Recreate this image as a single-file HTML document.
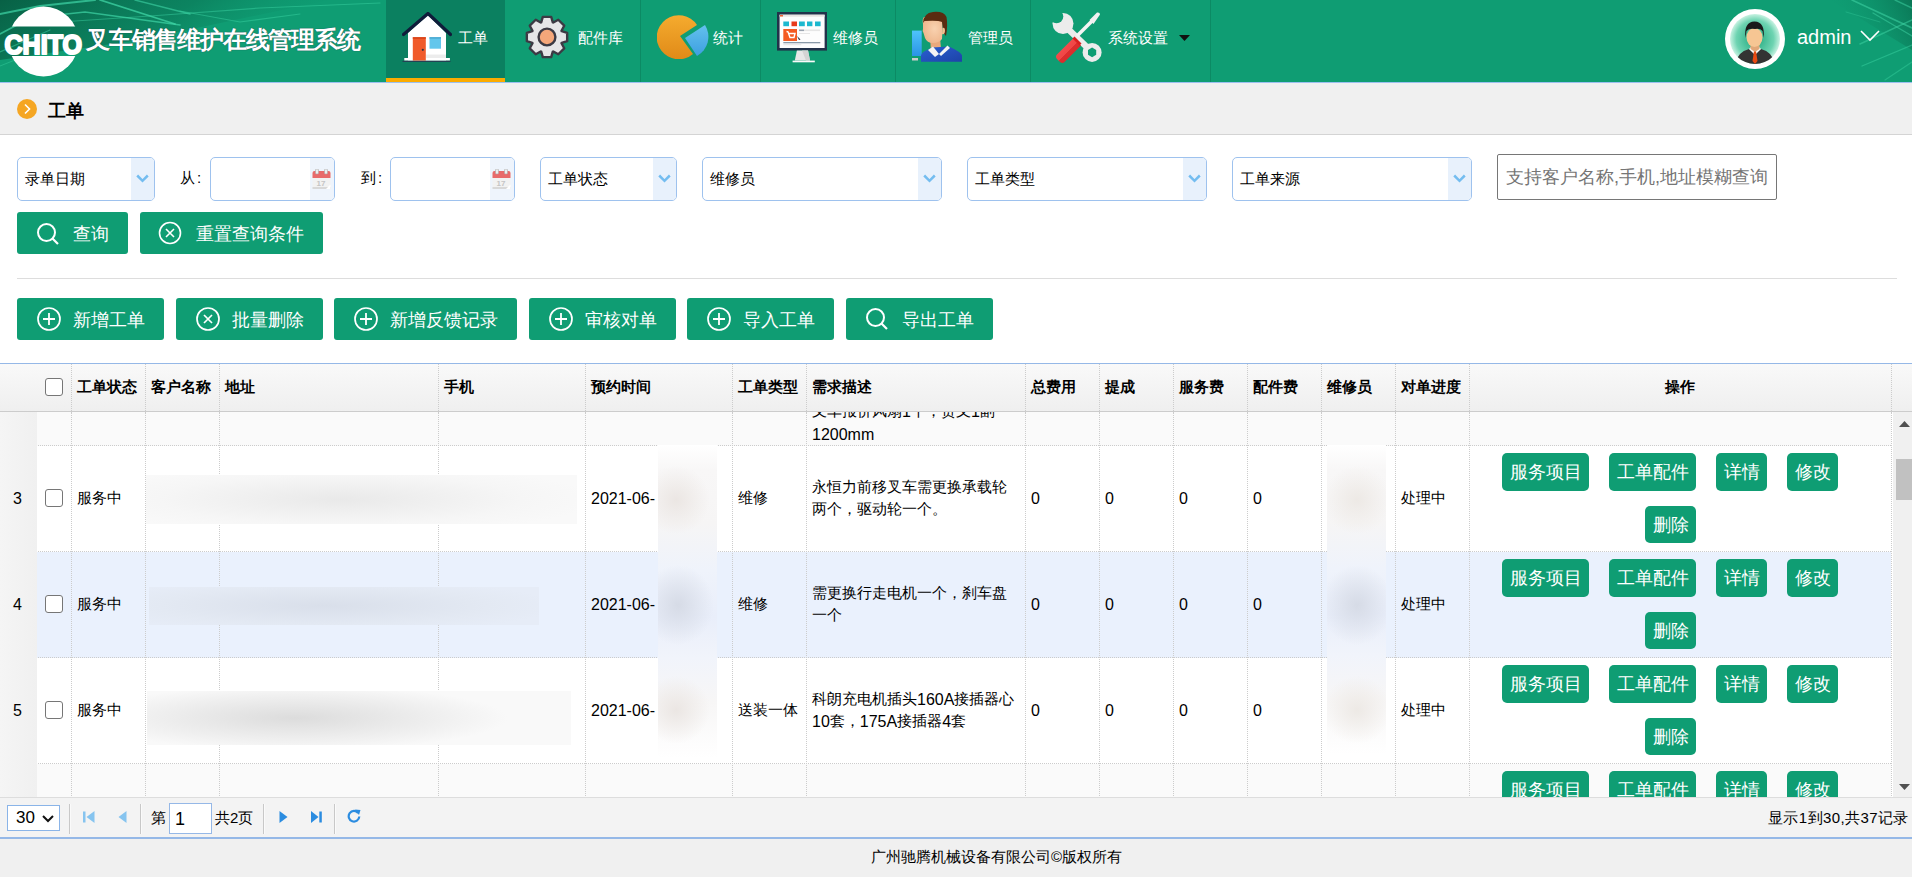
<!DOCTYPE html>
<html><head><meta charset="utf-8">
<style>
*{margin:0;padding:0;box-sizing:border-box}
html,body{width:1912px;height:877px;overflow:hidden;background:#f0f0f0;font-family:"Liberation Sans",sans-serif;color:#000}
.abs{position:absolute}
#hdr{position:absolute;left:0;top:0;width:1912px;height:82px;background:#0f9d73;overflow:hidden}
.nav{position:absolute;top:0;height:82px;border-right:1px solid #0c8a64}
.nav .t{position:absolute;top:29px;font-size:15px;color:#fff;line-height:18px;white-space:nowrap}
.nav svg{position:absolute;top:12px}
#crumb{position:absolute;left:0;top:83px;width:1912px;height:52px;background:#f0f0f0;border-bottom:1px solid #d4d4d4}
#main{position:absolute;left:0;top:135px;width:1912px;height:228px;background:#fff}
.sel{position:absolute;top:157px;height:44px;border:1px solid #9ec2ee;border-radius:5px;background:#fff;overflow:hidden}
.sel .v{position:absolute;left:7px;top:12px;font-size:15px;line-height:18px;color:#000;white-space:nowrap}
.sel .dd{position:absolute;right:0;top:0;width:23px;height:100%;background:#e8f1fc}
.sel .dd svg{position:absolute;left:5px;top:16px}
.lbl{position:absolute;top:169px;font-size:15px;line-height:18px}
.btn{position:absolute;background:#0f9d73;border-radius:3px;color:#fff;font-size:18px;line-height:22px;white-space:nowrap}
.btn svg{position:absolute}
.btn span{position:absolute}
#grid{position:absolute;left:0;top:364px;width:1912px;height:434px;background:#fff;overflow:hidden}
.hrow{position:absolute;left:0;top:0;width:1891px;height:48px;background:linear-gradient(#f9f9f9,#efefef);border-bottom:1px solid #ccc}
.hc{position:absolute;top:14px;font-size:15px;font-weight:bold;line-height:18px;white-space:nowrap}
.vl{position:absolute;width:0;border-left:1px dotted #ccc}
.row{position:absolute;left:0;width:1891px;border-bottom:1px dotted #ccc}
.cell{position:absolute;font-size:15px;line-height:22px;white-space:nowrap}
.ob{position:absolute;height:38px;background:#0f9d73;border-radius:5px;color:#fff;font-size:18.3px;line-height:38px;text-align:center;white-space:nowrap}
.rn{position:absolute;left:0;width:37px;background:linear-gradient(90deg,#f5f5f5,#f0f0f0)}
.cb{position:absolute;width:18px;height:18px;border:1px solid #767676;border-radius:3px;background:#fff}
#pager{position:absolute;left:0;top:797px;width:1912px;height:42px;background:#f3f3f3;border-top:1px solid #ddd;border-bottom:2px solid #95b8e7}
.ptxt{position:absolute;font-size:15px;line-height:18px;white-space:nowrap}
.psep{position:absolute;top:6px;width:2px;height:30px;background:#c8c8c8;border-right:1px solid #fafafa}
#foot{position:absolute;left:0;top:839px;width:1912px;height:38px;background:#f0f0f0}
.blur{position:absolute;filter:blur(6px)}
.as{font-size:16px;position:relative;top:1px}
</style></head><body>

<div id="hdr">
  <!-- background pattern -->
  <svg class="abs" style="left:0;top:0" width="1912" height="82">
    <defs>
      <linearGradient id="lg1" x1="0" y1="0" x2="1" y2="0.3">
        <stop offset="0" stop-color="#075a40" stop-opacity="0.9"/><stop offset="0.55" stop-color="#096b4e" stop-opacity="0.5"/><stop offset="1" stop-color="#0f9d73" stop-opacity="0"/>
      </linearGradient>
      <linearGradient id="lg2" x1="1" y1="0" x2="0" y2="0.3">
        <stop offset="0" stop-color="#075a40" stop-opacity="0.8"/><stop offset="1" stop-color="#0f9d73" stop-opacity="0"/>
      </linearGradient>
      <mask id="bandm"><rect width="90" height="82" fill="#fff"/><rect x="0" y="26.5" width="90" height="29.5" fill="#000"/></mask>
    </defs>
    <path d="M0 0H330L140 40L0 60Z" fill="url(#lg1)"/>
    <g stroke="#3fd6a6" fill="none" stroke-linecap="round">
      <path d="M0 14 L40 6 L95 0" stroke-width="2" opacity="0.7"/>
      <path d="M0 34 L30 18 L85 12 L180 25" stroke-width="1.6" opacity="0.7"/>
      <path d="M100 0 L175 24" stroke-width="1.8" opacity="0.75"/>
      <path d="M135 0 L190 14" stroke-width="1.4" opacity="0.6"/>
      <path d="M60 22 L150 16 L260 8 L380 3" stroke-width="1.2" opacity="0.45"/>
      <path d="M180 11 L240 22 L300 14" stroke-width="1.2" opacity="0.45"/>
      <path d="M0 52 L50 30" stroke-width="1.2" opacity="0.5"/>
      <path d="M0 66 L20 58" stroke-width="1" opacity="0.4"/>
    </g>
    <path d="M1912 0H1830L1912 50Z" fill="url(#lg2)" opacity="0.7"/>
    <g stroke="#3fd6a6" fill="none" stroke-linecap="round">
      <path d="M1852 0 L1912 28" stroke-width="1.6" opacity="0.55"/>
      <path d="M1873 13 L1912 36" stroke-width="1.4" opacity="0.5"/>
      <path d="M1895 0 L1912 8" stroke-width="1.4" opacity="0.5"/>
      <path d="M1860 44 L1912 20" stroke-width="1.5" opacity="0.5"/>
      <path d="M1862 66 L1912 45" stroke-width="1.3" opacity="0.45"/>
      <path d="M1885 80 L1912 62" stroke-width="1.2" opacity="0.4"/>
      <path d="M1846 12 L1880 22" stroke-width="1" opacity="0.3"/>
    </g>
  </svg>
  <!-- logo -->
  <svg class="abs" style="left:0;top:0" width="90" height="82">
    <circle cx="43.5" cy="41.5" r="35" fill="#fff" mask="url(#bandm)"/>
    <text x="4.5" y="54" font-family="Liberation Sans" font-weight="bold" font-size="28" fill="#fff" stroke="#fff" stroke-width="2.2" stroke-linejoin="round" textLength="77.5" lengthAdjust="spacingAndGlyphs">CHITO</text>
  </svg>
  <div class="abs" style="left:86px;top:26px;font-size:24px;line-height:28px;font-weight:bold;color:#fff;letter-spacing:-1.2px;white-space:nowrap;text-shadow:0 0 1px #234">叉车销售维护在线管理系统</div>

  <!-- nav -->
  <div class="nav" style="left:386px;width:119px;background:#0b8060;border-right:none">
    <svg style="left:16px;top:12px" width="50" height="52" viewBox="0 0 50 52">
      <path d="M6 48.6V21L26 3L44 21V48.6Z" fill="#fff"/>
      <path d="M23.8 42.5H44V46H23.8Z" fill="#ececec"/>
      <path d="M1.5 22.5L26 1.5L48.5 22.5" stroke="#0f1c3a" stroke-width="3.2" fill="none" stroke-linejoin="round" stroke-linecap="round"/>
      <rect x="2.3" y="46" width="45.6" height="2.6" fill="#fff"/>
      <rect x="10.8" y="25.2" width="13" height="23.4" fill="#f05a2a"/>
      <rect x="10.8" y="25.2" width="13" height="1.6" fill="#d84418"/>
      <circle cx="20.8" cy="37.8" r="1.1" fill="#2a3344"/>
      <rect x="27.5" y="25.2" width="11.5" height="11.5" fill="#62c6ec"/>
      <rect x="27.5" y="25.2" width="11.5" height="1.5" fill="#4aa8d0"/>
      <rect x="0.5" y="48.8" width="48" height="1" fill="#2a3350"/>
    </svg>
    <div class="t" style="left:72px">工单</div>
    <div class="abs" style="left:0;top:78px;width:119px;height:4px;background:#fbab00"></div>
  </div>
  <div class="nav" style="left:505px;width:136px">
    <svg style="left:19px;top:14px" width="46" height="46" viewBox="0 0 46 46">
      <path d="M17.20 8.30L18.80 2.83L27.20 2.83L28.80 8.30A15.8 15.8 0 0 1 29.29 8.51L34.29 5.77L40.23 11.71L37.49 16.71A15.8 15.8 0 0 1 37.70 17.20L43.17 18.80L43.17 27.20L37.70 28.80A15.8 15.8 0 0 1 37.49 29.29L40.23 34.29L34.29 40.23L29.29 37.49A15.8 15.8 0 0 1 28.80 37.70L27.20 43.17L18.80 43.17L17.20 37.70A15.8 15.8 0 0 1 16.71 37.49L11.71 40.23L5.77 34.29L8.51 29.29A15.8 15.8 0 0 1 8.30 28.80L2.83 27.20L2.83 18.80L8.30 17.20A15.8 15.8 0 0 1 8.51 16.71L5.77 11.71L11.71 5.77L16.71 8.51A15.8 15.8 0 0 1 17.20 8.30Z" fill="#e6e6e8" stroke="#3c3a44" stroke-width="2.4" stroke-linejoin="round"/>
      <circle cx="23" cy="23" r="8.4" fill="#f5a77a" stroke="#3c3a44" stroke-width="2.4"/>
    </svg>
    <div class="t" style="left:73px">配件库</div>
  </div>
  <div class="nav" style="left:641px;width:120px">
    <svg style="left:16px;top:13px" width="52" height="46" viewBox="0 0 52 46">
      <defs><linearGradient id="po" x1="0" y1="0" x2="0" y2="1"><stop offset="0" stop-color="#f5ab2e"/><stop offset="1" stop-color="#e08a18"/></linearGradient>
      <linearGradient id="pb" x1="0" y1="0" x2="0" y2="1"><stop offset="0" stop-color="#63c1ee"/><stop offset="1" stop-color="#3d9fe0"/></linearGradient></defs>
      <path d="M23 23 L40 12 A22 22 0 1 0 36 41 Z" fill="url(#po)"/>
      <path d="M28 25 L48 12 A22 22 0 0 1 40 43 Z" fill="url(#pb)"/>
    </svg>
    <div class="t" style="left:72px">统计</div>
  </div>
  <div class="nav" style="left:761px;width:135px">
    <svg style="left:16px;top:12px" width="52" height="52" viewBox="0 0 52 52">
      <rect x="0" y="0" width="50" height="38.6" fill="#22324a"/>
      <rect x="2.6" y="2.7" width="45" height="33.3" fill="#fdfdfd"/>
      <rect x="2.6" y="2.7" width="45" height="2" fill="#e8e4e2"/>
      <rect x="3" y="3" width="3" height="1.5" fill="#f06030"/>
      <rect x="6.3" y="9.5" width="5.7" height="4.7" fill="#1cb8cf"/><rect x="14.5" y="9.5" width="5.5" height="4.7" fill="#e83a1a"/><rect x="22" y="9.5" width="5.8" height="4.7" fill="#1cb8cf"/><rect x="30" y="9.5" width="5.4" height="4.7" fill="#1cb8cf"/><rect x="38" y="9.5" width="5.6" height="4.7" fill="#1cb8cf"/>
      <rect x="6.3" y="17" width="13.7" height="12" fill="#f45a22"/>
      <path d="M9.5 19.5 L11 19.8 L13 25.5 H17 L18 21.5 H11.8" stroke="#fff" stroke-width="1.4" fill="none"/>
      <path d="M20 24 L23.5 27.5 L22 28Z" fill="#223"/>
      <rect x="22" y="17.5" width="5" height="1.6" fill="#9aa4b0"/><rect x="27" y="17.5" width="16" height="1.6" fill="#e6e6e6"/>
      <rect x="22" y="21" width="11" height="0.8" fill="#e0e0e0"/>
      <rect x="6.3" y="30" width="37" height="1.3" fill="#8a9aa8"/>
      <rect x="6.3" y="32.2" width="18" height="1" fill="#e4e4e4"/>
      <path d="M19.9 38.6 H31 L33 48.6 H17.8Z" fill="#e8e8e8"/>
      <path d="M25 38.6 H31 L33 48.6 H29Z" fill="#d4d4d4"/>
      <rect x="15.6" y="48.6" width="22.2" height="1.7" fill="#fafafa"/>
    </svg>
    <div class="t" style="left:72px">维修员</div>
  </div>
  <div class="nav" style="left:896px;width:135px">
    <svg style="left:15px;top:11px" width="52" height="52" viewBox="0 0 52 52">
      <defs><linearGradient id="mb" x1="0" y1="0" x2="0" y2="1"><stop offset="0" stop-color="#4fc4fb"/><stop offset="1" stop-color="#2a94e6"/></linearGradient>
      <linearGradient id="sw" x1="0" y1="0" x2="1" y2="1"><stop offset="0" stop-color="#2a5fd0"/><stop offset="1" stop-color="#1d42a8"/></linearGradient>
      <radialGradient id="fc" cx="0.6" cy="0.45" r="0.6"><stop offset="0" stop-color="#f9d2b0"/><stop offset="1" stop-color="#eeb68c"/></radialGradient></defs>
      <rect x="1" y="19.6" width="9.7" height="25.4" fill="url(#mb)"/>
      <rect x="1" y="47" width="6" height="2.5" fill="#ccc"/>
      <path d="M19 26 L29 26 L30 38 L20 40Z" fill="#e9a97c"/>
      <path d="M10 50.7 V44.5 Q11 41 15 39.5 L21 36.5 L38 35.5 Q50 41 51 44.5 V50.7Z" fill="url(#sw)"/>
      <path d="M17 39 L22 35.5 L28 43 L24 46Z" fill="#f4f4f4"/>
      <path d="M28 43 L36.5 34.5 L39 37 L30 45Z" fill="#f4f4f4"/>
      <path d="M12 13 Q11 8 13 6 L29 6 Q32 8 31.5 18 L31 28 Q28 32 22 32 Q16 32 14 27 L12.5 22 Q11 20 12 18Z" fill="url(#fc)"/>
      <path d="M12 12 Q12.5 2 22 1 Q33 0 35.5 6 Q37 14 35 25 L32.5 22 L31 11 Q27 9 13.5 10 Z" fill="#5a2c10"/>
      <path d="M31.5 17 Q34 16 34 20 Q33.5 24 31 23Z" fill="#f0c090"/>
    </svg>
    <div class="t" style="left:72px">管理员</div>
  </div>
  <div class="nav" style="left:1031px;width:180px">
    <svg style="left:19px;top:11px" width="52" height="52" viewBox="0 0 52 52">
      <defs><mask id="wm"><rect width="52" height="52" fill="#fff"/><circle cx="6.5" cy="5.5" r="6.8" fill="#000"/><path d="M42.1 36.6 L46.2 39 V43.8 L42.1 46.2 L38 43.8 V39Z" fill="#000"/></mask>
      <linearGradient id="rh" x1="0" y1="0" x2="1" y2="1"><stop offset="0" stop-color="#f75656"/><stop offset="0.5" stop-color="#f04646"/><stop offset="0.51" stop-color="#dc2e2e"/><stop offset="1" stop-color="#d42626"/></linearGradient></defs>
      <g mask="url(#wm)" fill="#ececec">
        <circle cx="13" cy="12.5" r="10.5"/>
        <path d="M17 17 L42 41" stroke="#ececec" stroke-width="6.5"/>
        <circle cx="42.1" cy="41.4" r="9.5"/>
      </g>
      <path d="M27 25 L44 8" stroke="#f4f4f4" stroke-width="3.6"/>
      <path d="M39.5 9 L47 1.5 Q50 1 50 3.5 L43.5 13 Z" fill="#f0f0f0"/>
      <path d="M23.5 27 L7 43.5 Q5 45.5 7 48 L10 51 Q12.5 53 14.5 51 L31 34.5Z" fill="url(#rh)"/>
      <path d="M24.5 25.5 L31.5 32.5 L29.5 34.5 L22.5 27.5Z" fill="#d91f1f"/>
    </svg>
    <div class="t" style="left:77px">系统设置</div>
    <svg style="left:148px;top:35px" width="11" height="6"><path d="M0 0H11L5.5 6Z" fill="#111"/></svg>
  </div>

  <!-- user -->
  <svg class="abs" style="left:1725px;top:9px" width="60" height="60" viewBox="0 0 60 60">
    <defs><radialGradient id="av" cx="0.5" cy="0.5" r="0.5"><stop offset="0" stop-color="#1aa57a"/><stop offset="0.75" stop-color="#6fd4b2"/><stop offset="1" stop-color="#c8f2e2"/></radialGradient>
    <clipPath id="avc"><circle cx="30" cy="30" r="25"/></clipPath></defs>
    <circle cx="30" cy="30" r="30" fill="#fff"/>
    <circle cx="30" cy="30" r="25" fill="url(#av)"/>
    <g clip-path="url(#avc)">
      <path d="M10 56 Q12 43 24 40 L30 45 L36 40 Q48 43 50 56Z" fill="#333"/>
      <path d="M24 40 L30 46 L36 40 L34 38 H26Z" fill="#fafafa"/>
      <path d="M29 42 H31 L32.5 52 L30 55 L27.5 52Z" fill="#e84a12"/>
      <path d="M25.5 34 H34.5 V40 L30 43 L25.5 40Z" fill="#e2a878"/>
      <ellipse cx="29.5" cy="28.5" rx="8" ry="9.5" fill="#f6c693"/>
      <path d="M20.5 29 Q18.5 13 29.5 12.5 Q40.5 13 38.5 29 L37.5 22 Q35 19 30 20 Q24 19 21.5 22Z" fill="#1a1a1a"/>
    </g>
  </svg>
  <div class="abs" style="left:1797px;top:25px;font-size:20px;line-height:24px;color:#fff">admin</div>
  <svg class="abs" style="left:1860px;top:30px" width="20" height="12"><path d="M1 1 L10 10 L19 1" stroke="#fff" stroke-width="1.6" fill="none"/></svg>
</div>
<div class="abs" style="left:0;top:82px;width:1912px;height:1px;background:#9cc0f0"></div>

<!-- breadcrumb -->
<div id="crumb">
  <svg class="abs" style="left:17px;top:16px" width="20" height="20"><circle cx="10" cy="10" r="10" fill="#f5a623"/><path d="M8 5.5 L12.5 10 L8 14.5" stroke="#fff" stroke-width="1.6" fill="none"/></svg>
  <div class="abs" style="left:48px;top:17px;font-size:18px;line-height:22px;font-weight:bold">工单</div>
</div>

<!-- main filter area -->
<div id="main">
  <div class="abs" style="left:17px;top:143px;width:1880px;height:1px;background:#ddd"></div>
</div>

<div class="sel" style="left:17px;width:138px"><div class="v">录单日期</div><div class="dd"><svg width="13" height="9"><path d="M1.2 1.5 L6.5 6.8 L11.8 1.5" stroke="#74bdf0" stroke-width="2.5" fill="none"/></svg></div></div>
<div class="lbl" style="left:180px">从<span style="margin-left:2px">:</span></div>
<div class="sel" style="left:210px;width:125px"><div class="dd" style="width:24px;background:#eef4fc"><svg style="left:2px;top:11px" width="19" height="21"><rect x="0.5" y="2" width="18" height="18" rx="1.5" fill="#f2f2f2"/><rect x="0.5" y="18" width="18" height="2" fill="#d8d8d8"/><path d="M0.5 9V4A2 2 0 0 1 2.5 2H16.5A2 2 0 0 1 18.5 4V9Z" fill="#e86a6a"/><rect x="3.5" y="0" width="3" height="5" rx="1" fill="#eee" stroke="#aaa" stroke-width="0.6"/><rect x="12.5" y="0" width="3" height="5" rx="1" fill="#eee" stroke="#aaa" stroke-width="0.6"/><text x="4.5" y="17" font-size="8" font-weight="bold" fill="#c4c4c4" font-family="Liberation Sans">17</text><path d="M14 20 L18.5 15.5 V20Z" fill="#fff"/></svg></div></div>
<div class="lbl" style="left:361px">到<span style="margin-left:2px">:</span></div>
<div class="sel" style="left:390px;width:125px"><div class="dd" style="width:24px;background:#eef4fc"><svg style="left:2px;top:11px" width="19" height="21"><rect x="0.5" y="2" width="18" height="18" rx="1.5" fill="#f2f2f2"/><rect x="0.5" y="18" width="18" height="2" fill="#d8d8d8"/><path d="M0.5 9V4A2 2 0 0 1 2.5 2H16.5A2 2 0 0 1 18.5 4V9Z" fill="#e86a6a"/><rect x="3.5" y="0" width="3" height="5" rx="1" fill="#eee" stroke="#aaa" stroke-width="0.6"/><rect x="12.5" y="0" width="3" height="5" rx="1" fill="#eee" stroke="#aaa" stroke-width="0.6"/><text x="4.5" y="17" font-size="8" font-weight="bold" fill="#c4c4c4" font-family="Liberation Sans">17</text><path d="M14 20 L18.5 15.5 V20Z" fill="#fff"/></svg></div></div>
<div class="sel" style="left:540px;width:137px"><div class="v">工单状态</div><div class="dd"><svg width="13" height="9"><path d="M1.2 1.5 L6.5 6.8 L11.8 1.5" stroke="#74bdf0" stroke-width="2.5" fill="none"/></svg></div></div>
<div class="sel" style="left:702px;width:240px"><div class="v">维修员</div><div class="dd"><svg width="13" height="9"><path d="M1.2 1.5 L6.5 6.8 L11.8 1.5" stroke="#74bdf0" stroke-width="2.5" fill="none"/></svg></div></div>
<div class="sel" style="left:967px;width:240px"><div class="v">工单类型</div><div class="dd"><svg width="13" height="9"><path d="M1.2 1.5 L6.5 6.8 L11.8 1.5" stroke="#74bdf0" stroke-width="2.5" fill="none"/></svg></div></div>
<div class="sel" style="left:1232px;width:240px"><div class="v">工单来源</div><div class="dd"><svg width="13" height="9"><path d="M1.2 1.5 L6.5 6.8 L11.8 1.5" stroke="#74bdf0" stroke-width="2.5" fill="none"/></svg></div></div>
<div class="abs" style="left:1497px;top:154px;width:280px;height:46px;border:1px solid #767676;border-radius:2px;background:#fff">
  <div class="abs" style="left:8px;top:11px;font-size:18px;line-height:22px;color:#757575;white-space:nowrap">支持客户名称,手机,地址模糊查询</div>
</div>

<div class="btn" style="left:17px;top:212px;width:111px;height:42px">
  <svg style="left:19px;top:10px" width="24" height="24"><circle cx="10.5" cy="10.5" r="8.5" stroke="#fff" stroke-width="2" fill="none"/><path d="M16.5 16.5 L22 22" stroke="#fff" stroke-width="2.2"/></svg>
  <span style="left:56px;top:11px">查询</span>
</div>
<div class="btn" style="left:140px;top:212px;width:183px;height:42px">
  <svg style="left:18px;top:9px" width="24" height="24"><circle cx="12" cy="12" r="10.5" stroke="#fff" stroke-width="1.6" fill="none"/><path d="M8 8 L16 16 M16 8 L8 16" stroke="#fff" stroke-width="1.6"/></svg>
  <span style="left:56px;top:11px">重置查询条件</span>
</div>

<!-- toolbar -->
<div class="btn" style="left:17px;top:298px;width:147px;height:42px">
  <svg style="left:19px;top:8px" width="26" height="26"><circle cx="13" cy="13" r="11" stroke="#fff" stroke-width="1.7" fill="none"/><path d="M13 7 V19 M7 13 H19" stroke="#fff" stroke-width="1.8"/></svg>
  <span style="left:56px;top:11px">新增工单</span>
</div>
<div class="btn" style="left:176px;top:298px;width:147px;height:42px">
  <svg style="left:19px;top:8px" width="26" height="26"><circle cx="13" cy="13" r="11" stroke="#fff" stroke-width="1.7" fill="none"/><path d="M9 9 L17 17 M17 9 L9 17" stroke="#fff" stroke-width="1.7"/></svg>
  <span style="left:56px;top:11px">批量删除</span>
</div>
<div class="btn" style="left:334px;top:298px;width:183px;height:42px">
  <svg style="left:19px;top:8px" width="26" height="26"><circle cx="13" cy="13" r="11" stroke="#fff" stroke-width="1.7" fill="none"/><path d="M13 7 V19 M7 13 H19" stroke="#fff" stroke-width="1.8"/></svg>
  <span style="left:56px;top:11px">新增反馈记录</span>
</div>
<div class="btn" style="left:529px;top:298px;width:147px;height:42px">
  <svg style="left:19px;top:8px" width="26" height="26"><circle cx="13" cy="13" r="11" stroke="#fff" stroke-width="1.7" fill="none"/><path d="M13 7 V19 M7 13 H19" stroke="#fff" stroke-width="1.8"/></svg>
  <span style="left:56px;top:11px">审核对单</span>
</div>
<div class="btn" style="left:687px;top:298px;width:147px;height:42px">
  <svg style="left:19px;top:8px" width="26" height="26"><circle cx="13" cy="13" r="11" stroke="#fff" stroke-width="1.7" fill="none"/><path d="M13 7 V19 M7 13 H19" stroke="#fff" stroke-width="1.8"/></svg>
  <span style="left:56px;top:11px">导入工单</span>
</div>
<div class="btn" style="left:846px;top:298px;width:147px;height:42px">
  <svg style="left:19px;top:9px" width="24" height="24"><circle cx="10.5" cy="10.5" r="8.5" stroke="#fff" stroke-width="2" fill="none"/><path d="M16.5 16.5 L22 22" stroke="#fff" stroke-width="2.2"/></svg>
  <span style="left:56px;top:11px">导出工单</span>
</div>

<!-- GRID -->
<div class="abs" style="left:0;top:363px;width:1912px;height:1px;background:#95b8e7"></div>
<div id="grid">
<div class="hrow" style="width:1912px"></div>
<div class="vl" style="left:71px;top:0;height:47px"></div>
<div class="vl" style="left:145px;top:0;height:47px"></div>
<div class="vl" style="left:219px;top:0;height:47px"></div>
<div class="vl" style="left:438px;top:0;height:47px"></div>
<div class="vl" style="left:585px;top:0;height:47px"></div>
<div class="vl" style="left:732px;top:0;height:47px"></div>
<div class="vl" style="left:806px;top:0;height:47px"></div>
<div class="vl" style="left:1025px;top:0;height:47px"></div>
<div class="vl" style="left:1099px;top:0;height:47px"></div>
<div class="vl" style="left:1173px;top:0;height:47px"></div>
<div class="vl" style="left:1247px;top:0;height:47px"></div>
<div class="vl" style="left:1321px;top:0;height:47px"></div>
<div class="vl" style="left:1395px;top:0;height:47px"></div>
<div class="vl" style="left:1469px;top:0;height:47px"></div>
<div class="vl" style="left:1891px;top:0;height:47px"></div>
<div class="hc" style="left:77px">工单状态</div>
<div class="hc" style="left:151px">客户名称</div>
<div class="hc" style="left:225px">地址</div>
<div class="hc" style="left:444px">手机</div>
<div class="hc" style="left:591px">预约时间</div>
<div class="hc" style="left:738px">工单类型</div>
<div class="hc" style="left:812px">需求描述</div>
<div class="hc" style="left:1031px">总费用</div>
<div class="hc" style="left:1105px">提成</div>
<div class="hc" style="left:1179px">服务费</div>
<div class="hc" style="left:1253px">配件费</div>
<div class="hc" style="left:1327px">维修员</div>
<div class="hc" style="left:1401px">对单进度</div>
<div class="hc" style="left:1665px">操作</div>
<div class="cb" style="left:45px;top:14px"></div>
<div class="abs" style="left:0;top:48px;width:1912px;height:386px;overflow:hidden">
<div class="row" style="top:0px;height:34px;background:#fafafa"></div>
<div class="rn" style="top:0px;height:34px"></div>
<div class="row" style="top:34px;height:106px;background:#fff"></div>
<div class="rn" style="top:34px;height:106px"></div>
<div class="row" style="top:140px;height:106px;background:#eaf1fd"></div>
<div class="rn" style="top:140px;height:106px"></div>
<div class="row" style="top:246px;height:106px;background:#fff"></div>
<div class="rn" style="top:246px;height:106px"></div>
<div class="row" style="top:352px;height:57px;background:#fafafa"></div>
<div class="rn" style="top:352px;height:57px"></div>
<div class="vl" style="left:71px;top:0px;height:420px"></div>
<div class="vl" style="left:145px;top:0px;height:420px"></div>
<div class="vl" style="left:219px;top:0px;height:420px"></div>
<div class="vl" style="left:438px;top:0px;height:420px"></div>
<div class="vl" style="left:585px;top:0px;height:420px"></div>
<div class="vl" style="left:732px;top:0px;height:420px"></div>
<div class="vl" style="left:806px;top:0px;height:420px"></div>
<div class="vl" style="left:1025px;top:0px;height:420px"></div>
<div class="vl" style="left:1099px;top:0px;height:420px"></div>
<div class="vl" style="left:1173px;top:0px;height:420px"></div>
<div class="vl" style="left:1247px;top:0px;height:420px"></div>
<div class="vl" style="left:1321px;top:0px;height:420px"></div>
<div class="vl" style="left:1395px;top:0px;height:420px"></div>
<div class="vl" style="left:1469px;top:0px;height:420px"></div>
<div class="vl" style="left:1891px;top:0px;height:420px"></div>
<div class="cell" style="left:812px;top:-12px;line-height:22px">叉车报价风扇<span class="as">1</span>个，货叉<span class="as">1</span>副</div>
<div class="cell" style="left:812px;top:11px;line-height:22px"><span class="as">1200mm</span></div>
<div class="cell" style="left:0;width:35px;text-align:center;top:75px"><span class="as">3</span></div>
<div class="cb" style="left:45px;top:77px"></div>
<div class="cell" style="left:77px;top:75px">服务中</div>
<div class="cell" style="left:591px;top:75px"><span class="as">2021-06-</span></div>
<div class="cell" style="left:738px;top:75px">维修</div>
<div class="cell" style="left:812px;top:64px">永恒力前移叉车需更换承载轮<br>两个，驱动轮一个。</div>
<div class="cell" style="left:1031px;top:75px"><span class="as">0</span></div>
<div class="cell" style="left:1105px;top:75px"><span class="as">0</span></div>
<div class="cell" style="left:1179px;top:75px"><span class="as">0</span></div>
<div class="cell" style="left:1253px;top:75px"><span class="as">0</span></div>
<div class="cell" style="left:1401px;top:75px">处理中</div>
<div class="cell" style="left:0;width:35px;text-align:center;top:181px"><span class="as">4</span></div>
<div class="cb" style="left:45px;top:183px"></div>
<div class="cell" style="left:77px;top:181px">服务中</div>
<div class="cell" style="left:591px;top:181px"><span class="as">2021-06-</span></div>
<div class="cell" style="left:738px;top:181px">维修</div>
<div class="cell" style="left:812px;top:170px">需更换行走电机一个，刹车盘<br>一个</div>
<div class="cell" style="left:1031px;top:181px"><span class="as">0</span></div>
<div class="cell" style="left:1105px;top:181px"><span class="as">0</span></div>
<div class="cell" style="left:1179px;top:181px"><span class="as">0</span></div>
<div class="cell" style="left:1253px;top:181px"><span class="as">0</span></div>
<div class="cell" style="left:1401px;top:181px">处理中</div>
<div class="cell" style="left:0;width:35px;text-align:center;top:287px"><span class="as">5</span></div>
<div class="cb" style="left:45px;top:289px"></div>
<div class="cell" style="left:77px;top:287px">服务中</div>
<div class="cell" style="left:591px;top:287px"><span class="as">2021-06-</span></div>
<div class="cell" style="left:738px;top:287px">送装一体</div>
<div class="cell" style="left:812px;top:276px">科朗充电机插头<span class="as">160A</span>接插器心<br><span class="as">10</span>套，<span class="as">175A</span>接插器<span class="as">4</span>套</div>
<div class="cell" style="left:1031px;top:287px"><span class="as">0</span></div>
<div class="cell" style="left:1105px;top:287px"><span class="as">0</span></div>
<div class="cell" style="left:1179px;top:287px"><span class="as">0</span></div>
<div class="cell" style="left:1253px;top:287px"><span class="as">0</span></div>
<div class="cell" style="left:1401px;top:287px">处理中</div>
<div class="ob" style="left:1502px;top:41px;width:87px">服务项目</div>
<div class="ob" style="left:1609px;top:41px;width:87px">工单配件</div>
<div class="ob" style="left:1716px;top:41px;width:51px">详情</div>
<div class="ob" style="left:1787px;top:41px;width:51px">修改</div>
<div class="ob" style="left:1645px;top:94px;width:51px;height:37px;line-height:37px">删除</div>
<div class="ob" style="left:1502px;top:147px;width:87px">服务项目</div>
<div class="ob" style="left:1609px;top:147px;width:87px">工单配件</div>
<div class="ob" style="left:1716px;top:147px;width:51px">详情</div>
<div class="ob" style="left:1787px;top:147px;width:51px">修改</div>
<div class="ob" style="left:1645px;top:200px;width:51px;height:37px;line-height:37px">删除</div>
<div class="ob" style="left:1502px;top:253px;width:87px">服务项目</div>
<div class="ob" style="left:1609px;top:253px;width:87px">工单配件</div>
<div class="ob" style="left:1716px;top:253px;width:51px">详情</div>
<div class="ob" style="left:1787px;top:253px;width:51px">修改</div>
<div class="ob" style="left:1645px;top:306px;width:51px;height:37px;line-height:37px">删除</div>
<div class="ob" style="left:1502px;top:359px;width:87px">服务项目</div>
<div class="ob" style="left:1609px;top:359px;width:87px">工单配件</div>
<div class="ob" style="left:1716px;top:359px;width:51px">详情</div>
<div class="ob" style="left:1787px;top:359px;width:51px">修改</div>
<div class="ob" style="left:1645px;top:412px;width:51px;height:37px;line-height:37px">删除</div>
<div class="abs" style="left:146px;top:63px;width:431px;height:49px;background:radial-gradient(ellipse 60% 70% at 45% 50%,#e9e9e9,#f6f6f6 70%,#f9f9f9)"></div>
<div class="abs" style="left:149px;top:175px;width:390px;height:38px;background:radial-gradient(ellipse 60% 70% at 45% 50%,#d9dfea,#e3e9f3 70%,#e6ecf7)"></div>
<div class="abs" style="left:147px;top:279px;width:424px;height:54px;background:radial-gradient(ellipse 50% 60% at 35% 50%,#dcdcdc,#f0f0f0 70%,#f9f9f9)"></div>
<div class="abs" style="left:658px;top:33px;width:59px;height:313px;background:radial-gradient(ellipse 34px 34px at 18px 55px,#ebe6e3,rgba(235,230,227,0)),radial-gradient(ellipse 36px 40px at 20px 160px,#d6dbe6,rgba(214,219,230,0)),radial-gradient(ellipse 34px 34px at 18px 265px,#ebe6e3,rgba(235,230,227,0)),linear-gradient(#fff 0,#f8f7f7 8%,#f6f5f5 25%,#eff3fb 40%,#e9eefa 55%,#f1f4fb 68%,#f7f6f6 82%,#fff 100%)"></div>
<div class="abs" style="left:1327px;top:33px;width:59px;height:309px;background:radial-gradient(ellipse 34px 34px at 30px 55px,#ede9e5,rgba(237,233,229,0)),radial-gradient(ellipse 36px 40px at 30px 160px,#d6dbe6,rgba(214,219,230,0)),radial-gradient(ellipse 34px 34px at 30px 265px,#ede9e5,rgba(237,233,229,0)),linear-gradient(#fff 0,#f8f7f7 8%,#f6f5f5 25%,#eff3fb 40%,#e9eefa 55%,#f1f4fb 68%,#f7f6f6 82%,#fff 100%)"></div>
</div>
<div class="abs" style="left:1893px;top:48px;width:19px;height:386px;background:#f0f0f0"></div>
<svg class="abs" style="left:1899px;top:56px" width="11" height="8"><path d="M0 7H11L5.5 1Z" fill="#505050"/></svg>
<svg class="abs" style="left:1899px;top:419px" width="11" height="8"><path d="M0 1H11L5.5 7Z" fill="#505050"/></svg>
<div class="abs" style="left:1896px;top:95px;width:16px;height:41px;background:#c1c1c1"></div>
</div>

<!-- pager -->
<div id="pager">
<div class="abs" style="left:7px;top:7px;width:53px;height:26px;border:1px solid #8ab4e8;background:#fff"><div class="ptxt" style="left:8px;top:3px;font-size:17px">30</div><svg class="abs" style="left:34px;top:9px" width="12" height="8"><path d="M1 1 L6 6 L11 1" stroke="#111" stroke-width="2" fill="none"/></svg></div>
<div class="psep" style="left:69px"></div>
<div class="psep" style="left:140px"></div>
<div class="psep" style="left:263px"></div>
<div class="psep" style="left:334px"></div>
<svg class="abs" style="left:83px;top:13px" width="12" height="12"><rect x="0" y="0.5" width="2.5" height="11" fill="#86c4ef"/><path d="M11.5 0V12L3.5 6Z" fill="#86c4ef"/></svg>
<svg class="abs" style="left:118px;top:13px" width="9" height="12"><path d="M8.5 0V12L0.5 6Z" fill="#86c4ef"/></svg>
<div class="ptxt" style="left:151px;top:11px">第</div>
<div class="abs" style="left:169px;top:5px;width:43px;height:31px;border:1px solid #95b8e7;background:#fff"><div class="ptxt" style="left:5px;top:5px;font-size:18px;line-height:20px">1</div></div>
<div class="ptxt" style="left:215px;top:11px">共2页</div>
<svg class="abs" style="left:279px;top:13px" width="9" height="12"><path d="M0.5 0V12L8.5 6Z" fill="#2b8ce0"/></svg>
<svg class="abs" style="left:311px;top:13px" width="11" height="12"><path d="M0 0V12L7.5 6Z" fill="#2b8ce0"/><rect x="8.3" y="0.5" width="2.5" height="11" fill="#2b8ce0"/></svg>
<svg class="abs" style="left:347px;top:11px" width="14" height="14"><path d="M11.2 4 A5.3 5.3 0 1 0 12.3 7.5" stroke="#2b8ce0" stroke-width="2.2" fill="none"/><path d="M8 0.5 L13.5 1 L12 6Z" fill="#2b8ce0"/></svg>
<div class="ptxt" style="left:1768px;top:11px;letter-spacing:0.4px">显示1到30,共37记录</div>
</div>
<div id="foot"><div class="abs" style="left:871px;top:9px;font-size:15px;line-height:18px;white-space:nowrap">广州驰腾机械设备有限公司©版权所有</div></div>

</body></html>
